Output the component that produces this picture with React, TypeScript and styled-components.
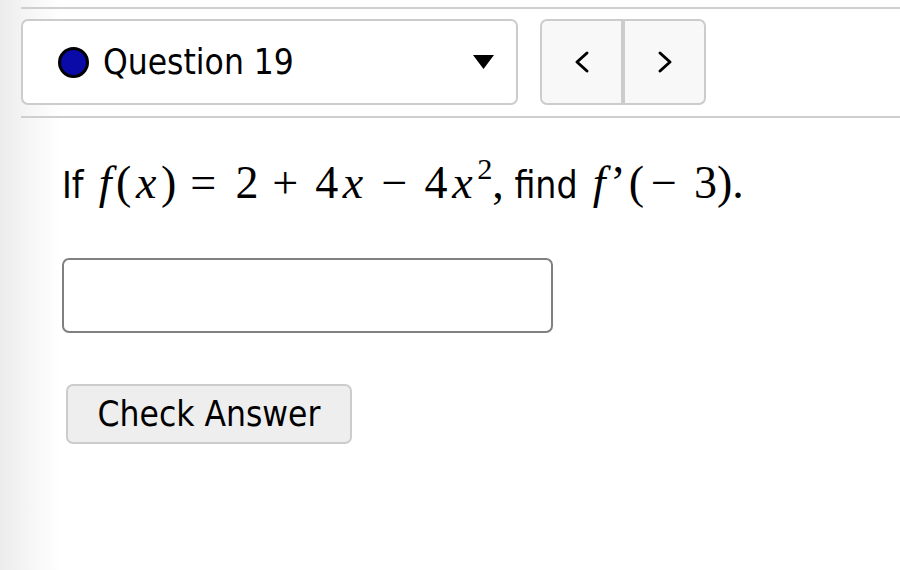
import React from "react";
import styled, { createGlobalStyle } from "styled-components";

const Global = createGlobalStyle`
  html, body { margin: 0; padding: 0; }
  body {
    width: 900px;
    height: 570px;
    overflow: hidden;
    background: linear-gradient(90deg, #ececec 0px, #f6f6f6 30px, #ffffff 62px);
    font-family: "DejaVu Sans Condensed", "DejaVu Sans", Lato, sans-serif;
    color: #000;
  }
`;

const Page = styled.div`
  padding: 7px 0 0 21px;
`;

const Rule = styled.div`
  height: 2px;
  background: #cfcfcf;
`;

const Header = styled.div`
  display: flex;
  gap: 22px;
  margin: 10px 0 11px 0;
`;

const Dropdown = styled.div`
  box-sizing: border-box;
  width: 497px;
  height: 86px;
  border: 2px solid #cccccc;
  border-radius: 7px;
  background: #fff;
  display: flex;
  align-items: center;
  gap: 14px;
  padding: 0 22px 0 35px;
`;

const Dot = styled.span`
  box-sizing: border-box;
  width: 31px;
  height: 31px;
  border-radius: 50%;
  background: #0a0aa8;
  border: 3px solid #000;
  flex: none;
`;

const Label = styled.span`
  font-size: 35px;
  flex: 1;
`;

const Caret = styled.svg`
  width: 21px;
  height: 14px;
  flex: none;
`;

const NavGroup = styled.div`
  box-sizing: border-box;
  width: 166px;
  height: 86px;
  border: 2px solid #cccccc;
  border-radius: 7px;
  background: #f8f8f8;
  display: flex;
  overflow: hidden;
`;

const NavButton = styled.button<{ $divider?: boolean }>`
  flex: 1;
  border: none;
  border-left: ${(p) => (p.$divider ? "4px solid #cccccc" : "none")};
  background: transparent;
  display: flex;
  align-items: center;
  justify-content: center;
  padding: 0;
  margin: 0;
`;

const Chevron = styled.svg`
  width: 18px;
  height: 24px;
`;

const Body = styled.div`
  padding-left: 41px;
`;

const QuestionLine = styled.p`
  margin: 35px 0 0 0;
  height: 105px;
  line-height: 60px;
  white-space: pre;
  font-size: 37px;
`;

const Math = styled.span`
  font-family: "Liberation Serif", "DejaVu Serif", serif;
  font-size: 46px;
`;

const Var = styled.i`
  font-style: italic;
  padding: 0 0.1em;
`;

const Prime = styled.span`
  padding-right: 0.07em;
`;

const Op = styled.span<{ $kind: "rel" | "bin" | "pre" }>`
  padding: ${(p) =>
    p.$kind === "rel"
      ? "0 0.42em 0 0.3em"
      : p.$kind === "bin"
      ? "0 0.37em 0 0.3em"
      : "0 0.37em 0 0.15em"};
`;

const Sup = styled.sup`
  font-size: 0.66em;
  vertical-align: 0.64em;
  line-height: 0;
`;

const Answer = styled.input`
  box-sizing: border-box;
  display: block;
  width: 491px;
  height: 75px;
  border: 2px solid #808080;
  border-radius: 7px;
  background: #fff;
  outline: none;
  font-size: 30px;
`;

const CheckButton = styled.button`
  box-sizing: border-box;
  display: block;
  width: 286px;
  height: 60px;
  margin: 51px 0 0 4px;
  border: 2px solid #cccccc;
  border-radius: 7px;
  background: #eeeeee;
  font-family: "DejaVu Sans Condensed", "DejaVu Sans", Lato, sans-serif;
  font-size: 35px;
  color: #000;
  padding: 0;
`;

export default function App() {
  return (
    <>
      <Global />
      <Page>
        <Rule />
        <Header>
          <Dropdown>
            <Dot />
            <Label>Question 19</Label>
            <Caret viewBox="0 0 21 14">
              <polygon points="0,0 21,0 10.5,14" fill="#000" />
            </Caret>
          </Dropdown>
          <NavGroup>
            <NavButton aria-label="previous">
              <Chevron viewBox="0 0 18 24">
                <polyline points="14,3 4,12 14,21" fill="none" stroke="#000" strokeWidth="3" strokeLinecap="round" strokeLinejoin="round" />
              </Chevron>
            </NavButton>
            <NavButton $divider aria-label="next">
              <Chevron viewBox="0 0 18 24">
                <polyline points="4,3 14,12 4,21" fill="none" stroke="#000" strokeWidth="3" strokeLinecap="round" strokeLinejoin="round" />
              </Chevron>
            </NavButton>
          </NavGroup>
        </Header>
        <Rule />
        <Body>
          <QuestionLine>
            {"If "}
            <Math>
              <Var>f</Var>(<Var>x</Var>)<Op $kind="rel">=</Op>2<Op $kind="bin">+</Op>4<Var>x</Var>
              <Op $kind="bin">−</Op>4<Var>x</Var>
              <Sup>2</Sup>,
            </Math>
            {" find "}
            <Math>
              <Var>f</Var>
              <Prime>’</Prime>(<Op $kind="pre">−</Op>3).
            </Math>
          </QuestionLine>
          <Answer type="text" aria-label="answer" />
          <CheckButton>Check Answer</CheckButton>
        </Body>
      </Page>
    </>
  );
}
